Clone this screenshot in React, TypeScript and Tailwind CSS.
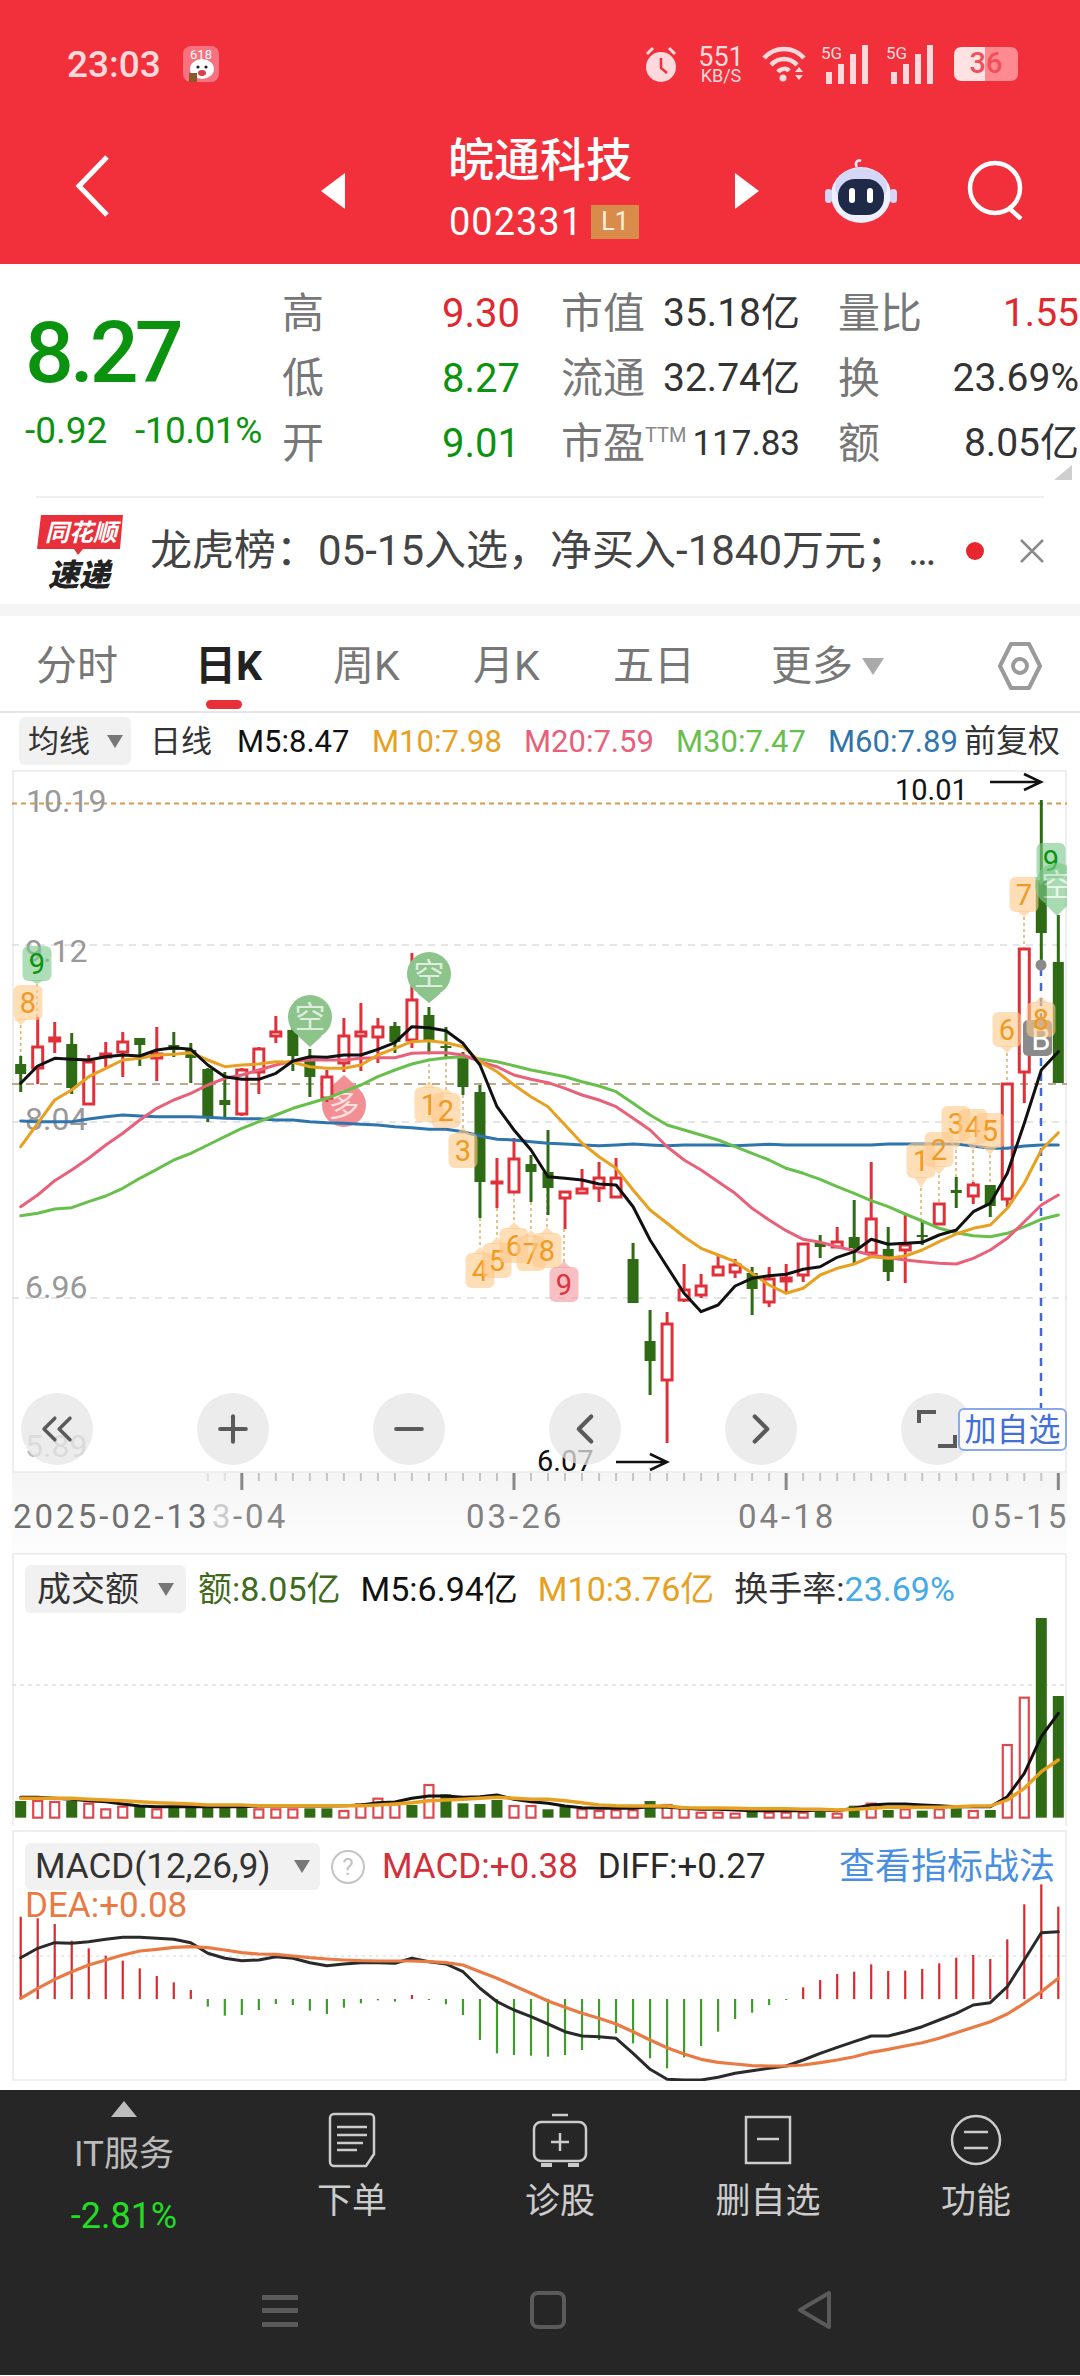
import { ChevronLeft, ChevronRight, ChevronsLeft, Minus, Plus } from "lucide-react";

type Candle = [number, number, number, number, "r" | "g"];

const RED = "#e0313a";
const GREEN = "#2f6a14";
const stepX = (i: number) => 20.7 + i * 17.01;

// hi, lo, body top, body bottom, colour
const CANDLES: Candle[] = [
  [1056, 1092, 1064, 1074, "g"], [1017, 1084, 1046, 1069, "r"], [1022, 1053, 1037, 1042, "r"], [1033, 1094, 1044, 1088, "g"],
  [1055, 1105, 1061, 1105, "r"], [1042, 1067, 1053, 1058, "r"], [1032, 1077, 1041, 1053, "r"], [1038, 1066, 1038, 1045, "g"],
  [1027, 1081, 1053, 1059, "r"], [1032, 1057, 1045, 1050, "g"], [1043, 1083, 1050, 1058, "g"], [1068, 1122, 1069, 1118, "g"],
  [1072, 1117, 1100, 1105, "g"], [1068, 1116, 1069, 1115, "r"], [1047, 1094, 1048, 1073, "r"], [1016, 1043, 1031, 1037, "r"],
  [1023, 1071, 1030, 1056, "g"], [1049, 1097, 1060, 1077, "g"], [1070, 1102, 1076, 1099, "r"], [1018, 1072, 1035, 1064, "r"],
  [1003, 1071, 1031, 1037, "r"], [1018, 1063, 1026, 1038, "r"], [1022, 1053, 1026, 1042, "g"], [953, 1048, 999, 1041, "r"],
  [1007, 1052, 1015, 1041, "g"], [1027, 1057, 1046, 1047, "g"], [1052, 1095, 1058, 1087, "g"], [1085, 1218, 1092, 1182, "g"],
  [1158, 1208, 1181, 1184, "r"], [1138, 1193, 1158, 1193, "r"], [1155, 1202, 1164, 1172, "g"], [1130, 1215, 1172, 1188, "g"],
  [1191, 1229, 1191, 1199, "r"], [1169, 1194, 1188, 1194, "r"], [1162, 1202, 1177, 1189, "r"], [1158, 1198, 1177, 1198, "r"],
  [1243, 1303, 1259, 1303, "g"], [1310, 1395, 1341, 1361, "g"], [1312, 1443, 1323, 1381, "r"], [1264, 1302, 1289, 1301, "r"],
  [1274, 1298, 1285, 1296, "r"], [1255, 1276, 1266, 1276, "r"], [1259, 1278, 1264, 1273, "r"], [1267, 1315, 1273, 1289, "g"],
  [1267, 1307, 1278, 1303, "r"], [1264, 1293, 1277, 1282, "r"], [1243, 1282, 1243, 1276, "r"], [1235, 1258, 1243, 1247, "g"],
  [1227, 1248, 1241, 1248, "r"], [1200, 1263, 1237, 1248, "g"], [1162, 1254, 1218, 1254, "r"], [1227, 1281, 1249, 1272, "g"],
  [1213, 1283, 1244, 1251, "r"], [1221, 1245, 1235, 1237, "g"], [1203, 1225, 1203, 1225, "r"], [1177, 1208, 1190, 1193, "g"],
  [1182, 1204, 1184, 1197, "r"], [1185, 1217, 1185, 1206, "g"], [1083, 1207, 1083, 1200, "r"], [948, 1103, 948, 1073, "r"],
  [800, 968, 880, 933, "g"], [915, 1083, 962, 1083, "g"],
];

const up = (z: number) => 760 + z / 3;
const dn = (z: number) => 1160 + z / 3;

const MA5 = [
  ...[970, 918, 895, 898, 900, 890, 885, 888, 870, 863, 868, 915, 950, 958, 958, 940, 903, 890, 892, 885, 885, 868, 848, 800, 803, 812, 850, 915, 1040, 1110, 1170].map(up),
  ...[50, 55, 60, 72, 75, 140, 240, 320, 400, 455, 435, 378, 355, 347, 343, 328, 320, 292, 275, 238, 253, 250, 247, 225, 210, 155, 130, 40].map(dn),
  ...[1090, 930, 875].map(up),
];
const MA10 = [
  ...[1160, 1090, 1020, 990, 950, 925, 900, 895, 885, 883, 878, 900, 920, 915, 912, 905, 907, 920, 925, 925, 915, 885, 865, 845, 842, 848, 860, 905, 935, 975, 1010, 1040, 1095, 1150].map(up),
  ...[-10, 25, 90, 150, 190, 230, 265, 285, 305, 340, 375, 400, 385, 345, 325, 312, 290, 295, 288, 270, 245, 222, 205, 195, 145, 70].map(dn),
  ...[1170, 1118].map(up),
];
const MA20 = [
  ...[140, 105, 62, 30].map(dn),
  ...[1195, 1155, 1120, 1080, 1045, 1020, 1000, 975, 955, 945, 930, 915, 903, 900, 900, 900, 895, 893, 893, 880, 878, 878, 885, 905, 920, 945, 958, 968, 985, 1005, 1020, 1040, 1075, 1110, 1160].map(up),
  ...[0, 30, 65, 100, 145, 180, 212, 238, 247, 260, 272, 285, 293, 300, 305, 310, 312, 295, 270, 235, 185, 135, 105].map(dn),
];
const MA30 = [
  ...[167, 160, 147, 143, 125, 108, 85, 55, 28].map(dn),
  ...[1200, 1180, 1155, 1130, 1105, 1085, 1065, 1045, 1030, 1015, 995, 975, 950, 930, 912, 900, 893, 890, 897, 905, 917, 930, 940, 950, 965, 978, 995, 1030, 1065, 1095, 1110, 1125, 1140, 1160, 1180].map(up),
  ...[0, 25, 40, 58, 80, 100, 122, 140, 162, 183, 205, 218, 227, 230, 220, 200, 178, 165].map(dn),
];
const MA60 = [
  1083, 1085, 1085, 1085, 1077, 1070, 1065, 1068, 1070, 1070, 1070, 1072, 1075, 1076, 1076, 1080, 1080, 1085, 1088, 1090, 1093, 1095, 1100, 1103, 1108, 1108, 1115, 1128, 1138, 1140, 1145,
  1150, 1152, 1155, 1157, 1155, 1152, 1155, 1157, 1155, 1155, 1155, 1157, 1155, 1153, 1155, 1155, 1155, 1155, 1155, 1155, 1152, 1152, 1152, 1152, 1152, 1158, 1165, 1165, 1158, 1155, 1155,
].map(up);

const VOL: [number, "r" | "g"][] = [
  [783, "g"], [780, "r"], [783, "r"], [783, "g"], [788, "r"], [805, "r"], [797, "r"], [800, "g"], [805, "r"], [800, "g"], [800, "g"], [800, "g"], [800, "g"], [800, "g"],
  [805, "r"], [805, "r"], [805, "r"], [805, "g"], [805, "g"], [810, "r"], [790, "r"], [773, "r"], [790, "r"], [795, "g"], [732, "r"], [763, "g"], [790, "g"], [792, "g"],
  [780, "g"], [795, "r"], [795, "r"], [808, "g"], [797, "g"], [805, "r"], [810, "r"], [808, "r"], [808, "r"], [783, "g"], [792, "r"], [800, "r"], [815, "r"], [815, "r"],
  [818, "r"], [812, "g"], [815, "r"], [815, "r"], [815, "r"], [815, "g"], [818, "r"], [797, "g"], [788, "r"], [810, "g"], [805, "r"], [812, "g"], [805, "r"], [805, "g"],
  [810, "r"], [810, "g"], [612, "r"], [470, "r"], [234, "g"], [468, "g"],
];
const VOL5 = [772, 772, 775, 778, 782, 785, 792, 798, 800, 800, 800, 800, 800, 800, 798, 798, 798, 798, 798, 797, 795, 788, 786, 775, 768, 768, 772, 770, 765, 778, 785, 790, 798, 803, 805, 805, 805, 800, 802, 805, 808, 808, 810, 812, 812, 812, 812, 810, 812, 805, 795, 792, 792, 795, 797, 800, 800, 800, 770, 700, 590, 520];
const VOL10 = [775, 775, 775, 775, 778, 780, 782, 785, 788, 790, 792, 795, 795, 795, 797, 797, 797, 797, 797, 797, 797, 795, 792, 788, 782, 780, 778, 775, 772, 775, 778, 778, 782, 788, 795, 797, 798, 798, 798, 803, 804, 804, 805, 806, 806, 806, 808, 808, 810, 808, 805, 802, 802, 802, 802, 800, 798, 798, 780, 745, 695, 660];

const HIST = [290, 295, 312, 362, 385, 407, 422, 445, 468, 487, 510, 560, 587, 585, 570, 552, 555, 572, 582, 563, 550, 541, 545, 525, 540, 553, 585, 660, 700, 705, 707, 710, 705, 690, 660, 640, 670, 715, 745, 712, 678, 635, 597, 578, 555, 540, 502, 480, 462, 455, 433, 453, 452, 447, 430, 413, 405, 417, 358, 253, 193, 260];
const DIFF = [413, 385, 368, 370, 365, 358, 352, 352, 355, 358, 368, 400, 415, 422, 420, 410, 415, 428, 437, 432, 428, 428, 430, 415, 425, 432, 455, 505, 545, 570, 590, 612, 635, 648, 650, 655, 700, 748, 778, 780, 780, 772, 760, 752, 745, 738, 720, 700, 682, 665, 648, 648, 635, 620, 600, 580, 555, 548, 500, 420, 338, 335];
const DEA = [535, 505, 478, 455, 435, 420, 405, 393, 388, 382, 380, 383, 390, 398, 402, 403, 408, 413, 417, 420, 422, 423, 423, 423, 425, 428, 435, 455, 475, 497, 520, 543, 562, 580, 595, 612, 635, 660, 683, 702, 718, 727, 732, 737, 738, 738, 735, 728, 720, 710, 697, 688, 678, 668, 655, 638, 622, 605, 582, 550, 515, 475];

const linePoints = (ys: number[]) => ys.map((y, i) => `${stepX(i).toFixed(1)},${y.toFixed(1)}`).join(" ");

function Curve({ ys, color, width = 3 }: { ys: number[]; color: string; width?: number }) {
  return <polyline points={linePoints(ys)} fill="none" stroke={color} strokeWidth={width} strokeLinejoin="round" strokeLinecap="round" />;
}

type TagProps = { x: number; y: number; tip: number; tipY: number; text: string; tone?: "orange" | "green" | "pink" };

// numbered flag sitting on a candle, the point aims at the candle
function Tag({ x, y, tip, tipY, text, tone = "orange" }: TagProps) {
  const fill = tone === "orange" ? "#fdc98a" : tone === "green" ? "#7cc98a" : "#f59aa0";
  const color = tone === "orange" ? "#f09a24" : tone === "green" ? "#0b930f" : "#e0313a";
  const w = 29;
  const h = 35;
  const base = tipY < y ? y + 1 : y + h - 1;
  return (
    <g>
      <polygon points={`${tip - 7},${base} ${tip + 7},${base} ${tip},${tipY}`} fill={fill} fillOpacity={0.62} />
      <rect x={x - w / 2} y={y} width={w} height={h} rx={6} fill={fill} fillOpacity={0.62} />
      <text x={x} y={y + 28} textAnchor="middle" fontSize={29} fill={color}>
        {text}
      </text>
    </g>
  );
}

function Drop({ x, y, tipY, text, fill }: { x: number; y: number; tipY: number; text: string; fill: string }) {
  const base = tipY > y ? y + 19 : y - 19;
  return (
    <g>
      <polygon points={`${x - 12},${base} ${x + 12},${base} ${x},${tipY}`} fill={fill} />
      <circle cx={x} cy={y} r={22} fill={fill} />
      <text x={x} y={y + 11} textAnchor="middle" fontSize={31} fill="#ffffff" fillOpacity={0.72}>
        {text}
      </text>
    </g>
  );
}

const LEADERS: [number, number, number][] = [
  [37, 984, 1017], [20.7, 1025, 1056], [429, 1052, 1085], [446, 1057, 1090], [463, 1095, 1128], [480, 1218, 1248], [497, 1208, 1238],
  [514, 1193, 1222], [531, 1202, 1230], [547, 1188, 1228], [564, 1229, 1262], [921, 1188, 1221], [939, 1175, 1203], [956, 1150, 1177],
  [973, 1150, 1182], [990, 1155, 1185], [1007, 1053, 1083], [1024, 917, 948],
];

function KChart() {
  return (
    <svg viewBox="12 770 1055 703" className="absolute inset-0 w-[1055px] h-[703px]">
      <line x1={12} x2={1067} y1={945} y2={945} stroke="#dddddd" strokeWidth={1.5} strokeDasharray="7 6" />
      <line x1={12} x2={1067} y1={1122} y2={1122} stroke="#dddddd" strokeWidth={1.5} strokeDasharray="7 6" />
      <line x1={12} x2={1067} y1={1298} y2={1298} stroke="#dddddd" strokeWidth={1.5} strokeDasharray="7 6" />
      <line x1={12} x2={1067} y1={803.5} y2={803.5} stroke="#d39a50" strokeWidth={2} strokeDasharray="5 4" />
      <line x1={12} x2={1067} y1={1084} y2={1084} stroke="#bda98c" strokeWidth={2} strokeDasharray="8 6" />

      <text x={26} y={812} fontSize={32} fill="#999999">10.19</text>
      <text x={25} y={962} fontSize={32} fill="#999999">9.12</text>
      <text x={25} y={1130} fontSize={32} fill="#999999">8.04</text>
      <text x={25} y={1298} fontSize={32} fill="#999999">6.96</text>
      <text x={25} y={1457} fontSize={32} fill="#bbbbbb">5.89</text>

      <Drop x={344} y={1105} tipY={1075} text="多" fill="#f28f94" />

      {LEADERS.map(([x, a, b]) => (
        <line key={`${x}-${a}`} x1={x} x2={x} y1={a} y2={b} stroke="#d9b26a" strokeWidth={1.5} strokeDasharray="3 3" />
      ))}

      <line x1={1041} x2={1041} y1={968} y2={1408} stroke="#4169d0" strokeWidth={2.5} strokeDasharray="8 7" />

      {CANDLES.map(([hi, lo, top, bot, c], i) => {
        const x = stepX(i);
        const color = c === "r" ? RED : GREEN;
        return (
          <g key={i}>
            <line x1={x} x2={x} y1={hi} y2={lo} stroke={color} strokeWidth={3} />
            {c === "r" ? (
              <rect x={x - 5} y={top + 1} width={10} height={Math.max(bot - top - 2, 1)} fill="#ffffff" stroke={color} strokeWidth={3} />
            ) : (
              <rect x={x - 5.5} y={top} width={11} height={Math.max(bot - top, 2)} fill={color} />
            )}
          </g>
        );
      })}

      <Curve ys={MA60} color="#2f75ad" />
      <Curve ys={MA30} color="#68bf4c" />
      <Curve ys={MA20} color="#e8607a" />
      <Curve ys={MA10} color="#e8a020" />
      <Curve ys={MA5} color="#111111" />

      <Drop x={310} y={1017} tipY={1047} text="空" fill="#8cc48c" />
      <Drop x={429} y={974} tipY={1003} text="空" fill="#8cc48c" />

      <Tag x={37} y={946} tip={37} tipY={984} text="9" tone="green" />
      <Tag x={28} y={985} tip={20.7} tipY={1025} text="8" />
      <Tag x={429} y={1087} tip={429} tipY={1082} text="1" />
      <Tag x={446} y={1093} tip={446} tipY={1088} text="2" />
      <Tag x={463} y={1133} tip={463} tipY={1127} text="3" />
      <Tag x={480} y={1253} tip={480} tipY={1247} text="4" />
      <Tag x={497} y={1243} tip={497} tipY={1237} text="5" />
      <Tag x={514} y={1228} tip={514} tipY={1222} text="6" />
      <Tag x={531} y={1236} tip={531} tipY={1230} text="7" />
      <Tag x={547} y={1233} tip={547} tipY={1227} text="8" />
      <Tag x={564} y={1267} tip={564} tipY={1261} text="9" tone="pink" />
      <Tag x={921} y={1143} tip={921} tipY={1188} text="1" />
      <Tag x={939} y={1132} tip={939} tipY={1175} text="2" />
      <Tag x={956} y={1106} tip={956} tipY={1150} text="3" />
      <Tag x={973} y={1109} tip={973} tipY={1150} text="4" />
      <Tag x={990} y={1113} tip={990} tipY={1155} text="5" />
      <Tag x={1007} y={1012} tip={1007} tipY={1053} text="6" />
      <Tag x={1024} y={877} tip={1024} tipY={917} text="7" />

      <rect x={1023} y={1020} width={29} height={36} rx={5} fill="#8a8a8a" />
      <text x={1041} y={1050} textAnchor="middle" fontSize={31} fill="#ffffff">B</text>
      <Tag x={1041} y={1002} tip={1041} tipY={996} text="8" />
      <circle cx={1041} cy={965} r={5.5} fill="#8a8a8a" />

      <Tag x={1051} y={843} tip={1041} tipY={885} text="9" tone="green" />
      <g opacity={0.65}>
        <Drop x={1057} y={885} tipY={916} text="空" fill="#7cc98a" />
      </g>

      <text x={895} y={800} fontSize={29} fill="#111111">10.01</text>
      <path d="M990 782h50M1024 774l17 8-17 8" fill="none" stroke="#111111" strokeWidth={2.5} />
      <text x={537} y={1471} fontSize={29} fill="#111111">6.07</text>
      <path d="M616 1462h50M650 1454l17 8-17 8" fill="none" stroke="#111111" strokeWidth={2.5} />
    </svg>
  );
}

function DateAxis() {
  return (
    <div className="relative h-[80px] w-[1055px] ml-[12px] bg-linear-to-b from-[#f5f5f5] to-[#fdfdfd]">
      <svg viewBox="12 1473 1055 80" className="absolute inset-0 w-[1055px] h-[80px]">
        {Array.from({ length: 51 }, (_, k) => {
          const i = k + 11;
          const major = (i - 13) % 16 === 0;
          return (
            <line
              key={i}
              x1={stepX(i)}
              x2={stepX(i)}
              y1={1473}
              y2={major ? 1490 : 1481}
              stroke={major ? "#888888" : "#c4c4c4"}
              strokeWidth={major ? 3 : 2}
              opacity={i < 13 ? 0.4 : 1}
            />
          );
        })}
        <text x={13} y={1528} fontSize={33} fill="#707070" className="tracking-[3px]">2025-02-13</text>
        <text x={212} y={1528} fontSize={33} fill="#cccccc" className="tracking-[3px]">3</text>
        <text x={233} y={1528} fontSize={33} fill="#888888" className="tracking-[3px]">-04</text>
        <text x={466} y={1528} fontSize={33} fill="#808080" className="tracking-[3px]">03-26</text>
        <text x={738} y={1528} fontSize={33} fill="#808080" className="tracking-[3px]">04-18</text>
        <text x={971} y={1528} fontSize={33} fill="#808080" className="tracking-[3px]">05-15</text>
      </svg>
    </div>
  );
}

function Caret() {
  return <span className="inline-block w-0 h-0 border-x-[8px] border-x-transparent border-t-[13px] border-t-[#777777]" />;
}

function VolumePanel() {
  const base = 1540 + 833 / 3;
  const vy = (z: number) => 1540 + z / 3;
  return (
    <div className="relative h-[277px] w-[1055px] ml-[12px] ring-2 ring-inset ring-[#eeeeee]">
      <svg viewBox="12 1553 1055 277" className="absolute inset-0 w-[1055px] h-[277px]">
        <rect x={0} y={1826} width={1080} height={5} fill="#ffffff" />
        <line x1={12} x2={1067} y1={1685} y2={1685} stroke="#dddddd" strokeWidth={1.5} strokeDasharray="4 4" />
        {VOL.map(([z, c], i) => {
          const x = stepX(i);
          const top = vy(z);
          return c === "g" ? (
            <rect key={i} x={x - 5.5} y={top} width={11} height={base - top} fill={GREEN} />
          ) : (
            <rect key={i} x={x - 4.5} y={top + 1} width={9} height={base - top - 1} fill="#ffffff" stroke="#dc4a50" strokeWidth={2.2} />
          );
        })}
        <Curve ys={VOL5.map(vy)} color="#111111" width={3} />
        <Curve ys={VOL10.map(vy)} color="#e8a020" width={3.4} />
      </svg>
      <div className="relative flex items-center h-[48px] pt-[12px] box-content text-[34px] leading-none">
        <div className="ml-[13px] flex items-center justify-between w-[161px] h-[48px] px-[12px] rounded-[6px] bg-[#f1f1f1] text-[#333333]">
          <span>成交额</span>
          <Caret />
        </div>
        <div className="ml-[12px] flex items-center gap-[20px]">
          <span className="text-[#3f6b1c]">额:8.05亿</span>
          <span className="text-[#111111]">M5:6.94亿</span>
          <span className="text-[#e8a020]">M10:3.76亿</span>
          <span className="text-[#333333]">
            换手率:<span className="text-[#45a9e8]">23.69%</span>
          </span>
        </div>
      </div>
    </div>
  );
}

function MacdPanel() {
  const my = (z: number) => 1820 + z / 3;
  const zero = my(537);
  return (
    <div className="relative h-[251px] w-[1055px] ml-[12px] ring-2 ring-inset ring-[#eeeeee]">
      <svg viewBox="12 1830 1055 251" className="absolute inset-0 w-[1055px] h-[251px]">
        <line x1={12} x2={1067} y1={1956} y2={1956} stroke="#e3e3e3" strokeWidth={1.5} strokeDasharray="3 4" />
        {HIST.map((z, i) => {
          const y = my(z);
          const isRed = z < 537;
          return (
            <line
              key={i}
              x1={stepX(i)}
              x2={stepX(i)}
              y1={Math.min(y, zero)}
              y2={Math.max(y, zero)}
              stroke={isRed ? "#d9292f" : "#3f9e2a"}
              strokeWidth={2.2}
            />
          );
        })}
        <Curve ys={DIFF.map(my)} color="#2a2a2a" width={3} />
        <Curve ys={DEA.map(my)} color="#ea7a44" width={3.2} />
      </svg>
      <div className="relative flex items-center h-[47px] pt-[13px] box-content text-[35px] leading-none">
        <div className="ml-[13px] flex items-center justify-between w-[295px] h-[47px] px-[10px] rounded-[6px] bg-[#f1f1f1] text-[#333333]">
          <span>MACD(12,26,9)</span>
          <Caret />
        </div>
        <span className="ml-[11px] flex items-center justify-center w-[34px] h-[34px] rounded-full border-2 border-[#c4c4c4] text-[24px] text-[#c4c4c4]">?</span>
        <span className="ml-[17px] text-[#d2303a]">MACD:+0.38</span>
        <span className="ml-[20px] text-[#2a2a2a]">DIFF:+0.27</span>
        <span className="ml-auto mr-[12px] text-[36px] text-[#4a8fdf]">查看指标战法</span>
      </div>
      <div className="relative ml-[13px] -mt-[2px] text-[35px] leading-[36px] text-[#ea7a44]">DEA:+0.08</div>
    </div>
  );
}

function RoundBtn({ children }: { children: React.ReactNode }) {
  return <div className="flex items-center justify-center w-[72px] h-[72px] rounded-full bg-[#e6e6e6]/75 text-[#5a5a5a]">{children}</div>;
}

function SignalBars({ className }: { className: string }) {
  return (
    <svg viewBox="0 0 52 40" className={`${className} w-[52px] h-[40px]`}>
      <text x={0} y={15} fontSize={17} fill="#ffd9db">5G</text>
      <rect x={5} y={28} width={6} height={12} fill="#ffd9db" />
      <rect x={17} y={20} width={6} height={20} fill="#ffd9db" />
      <rect x={29} y={10} width={6} height={30} fill="#ffd9db" />
      <rect x={41} y={1} width={6} height={39} fill="#ffd9db" />
    </svg>
  );
}

function StatusBar() {
  return (
    <div className="flex items-center h-[92px] pt-[36px] pl-[67px] pr-[62px] text-[#ffd9db]">
      <span className="text-[37px] font-medium leading-none">23:03</span>
      <svg viewBox="0 0 36 36" className="ml-[22px] w-[36px] h-[36px]">
        <rect width={36} height={36} rx={8} fill="#f7717e" />
        <text x={18} y={13} textAnchor="middle" fontSize={13} fill="#ffffff">618</text>
        <ellipse cx={19} cy={23} rx={12} ry={10} fill="#ffffff" />
        <circle cx={15} cy={21} r={1.6} fill="#222222" />
        <circle cx={23} cy={21} r={1.6} fill="#222222" />
        <ellipse cx={19} cy={27} rx={4} ry={3} fill="#d6404a" />
        <rect x={6} y={27} width={8} height={9} fill="#8a5a2a" />
      </svg>
      <div className="ml-auto flex items-center">
        <svg viewBox="0 0 36 38" className="w-[36px] h-[38px]">
          <circle cx={18} cy={22} r={15} fill="#ffd9db" />
          <path d="M18 13v10l6 5" fill="none" stroke="#f1303b" strokeWidth={2.5} />
          <path d="M4 9l6-6M32 9l-6-6" stroke="#ffd9db" strokeWidth={3} />
        </svg>
        <div className="ml-[20px] flex flex-col items-center w-[44px] leading-none">
          <span className="text-[27px] h-[23px] leading-[23px]">551</span>
          <span className="text-[18px] h-[14px] leading-[14px]">KB/S</span>
        </div>
        <svg viewBox="0 0 46 38" className="ml-[18px] w-[46px] h-[38px]">
          <g fill="none" stroke="#ffd9db" strokeWidth={4.5}>
            <path d="M3 13C14 1 32 1 43 13" />
            <path d="M10 20C17 12 29 12 36 20" />
            <path d="M17 27C20 23 26 23 28 26" />
          </g>
          <circle cx={22} cy={33} r={3.5} fill="#ffd9db" />
          <path d="M34 27l4-5 4 5zM34 30l4 5 4-5z" fill="#ffd9db" />
        </svg>
        <SignalBars className="ml-[14px]" />
        <SignalBars className="ml-[13px]" />
        <div className="relative ml-[16px] flex w-[64px] h-[34px] rounded-[7px] overflow-hidden">
          <div className="w-[31px] bg-[#ffe2e4]" />
          <div className="flex-1 bg-[#ff8a92]" />
          <span className="absolute inset-0 flex items-center justify-center text-[29px] font-medium text-[#f1505a]">36</span>
        </div>
      </div>
    </div>
  );
}

function Robot() {
  return (
    <svg viewBox="0 0 72 66" className="w-[72px] h-[66px]">
      <path d="M32 10c-3-4 1-8 4-6" fill="none" stroke="#e9e6ff" strokeWidth={2.5} />
      <ellipse cx={36} cy={38} rx={30} ry={28} fill="#eef0ff" />
      <ellipse cx={36} cy={30} rx={26} ry={19} fill="#d6d6f6" />
      <rect x={13} y={22} width={46} height={36} rx={17} fill="#1f2a48" />
      <rect x={24} y={31} width={6} height={15} rx={3} fill="#ffffff" />
      <rect x={42} y={31} width={6} height={15} rx={3} fill="#ffffff" />
      <rect x={0} y={32} width={7} height={14} rx={3.5} fill="#d6d6f6" />
      <rect x={65} y={32} width={7} height={14} rx={3.5} fill="#d6d6f6" />
    </svg>
  );
}

function NavRow() {
  return (
    <div className="flex items-center h-[172px] pl-[72px] text-white">
      <svg viewBox="0 0 40 62" className="w-[40px] h-[62px] mt-[16px]">
        <path d="M35 2L7 31l28 29" fill="none" stroke="#ffffff" strokeWidth={5} />
      </svg>
      <svg viewBox="0 0 24 36" className="ml-[209px] w-[24px] h-[36px] mt-[26px]">
        <path d="M24 0v36L0 18z" fill="#ffffff" />
      </svg>
      <div className="flex flex-col items-center w-[390px] mt-[13px]">
        <span className="text-[46px] leading-[60px] font-medium">皖通科技</span>
        <div className="flex items-center mt-[14px] ml-[8px]">
          <span className="text-[38px] leading-[36px] tracking-[1px]">002331</span>
          <span className="ml-[8px] flex items-center justify-center w-[48px] h-[34px] bg-[#d98c4a] text-[25px] text-[#fff2e0]">L1</span>
        </div>
      </div>
      <svg viewBox="0 0 24 36" className="w-[24px] h-[36px] mt-[26px]">
        <path d="M0 0v36l24-18z" fill="#ffffff" />
      </svg>
      <div className="ml-[66px] w-[72px] mt-[24px]">
        <Robot />
      </div>
      <svg viewBox="0 0 60 60" className="ml-[69px] w-[60px] h-[60px] mt-[24px]">
        <circle cx={29} cy={28} r={25} fill="none" stroke="#ffffff" strokeWidth={4.5} />
        <path d="M42 47l13 12" stroke="#ffffff" strokeWidth={4.5} />
      </svg>
    </div>
  );
}

function StatRow({ label, val, tone, b, c }: { label: string; val: string; tone: string; b: React.ReactNode; c: React.ReactNode }) {
  return (
    <div className="flex items-center h-[65px]">
      <span className="w-[160px] text-[42px] leading-none text-[#777777]">{label}</span>
      <span className={`w-[78px] text-right text-[40px] leading-none ${tone}`}>{val}</span>
      <div className="ml-[41px] w-[239px] flex items-center justify-between whitespace-nowrap">{b}</div>
      <div className="ml-[38px] w-[241px] flex items-center justify-between whitespace-nowrap">{c}</div>
    </div>
  );
}

function Label({ children }: { children: React.ReactNode }) {
  return <span className="text-[42px] leading-none text-[#777777]">{children}</span>;
}

function Num({ children, tone = "text-[#333333]" }: { children: React.ReactNode; tone?: string }) {
  return <span className={`text-[39px] leading-none ${tone}`}>{children}</span>;
}

function Quote() {
  return (
    <div className="relative flex h-[232px] pt-[17px]">
      <div className="w-[282px] pl-[25px] text-[#0b930f]">
        <div className="mt-[29px] text-[86px] leading-[86px] font-medium tracking-[-4px]">8.27</div>
        <div className="mt-[16px] flex text-[37px] leading-none whitespace-nowrap">
          <span className="w-[110px]">-0.92</span>
          <span className="tracking-[-0.5px]">-10.01%</span>
        </div>
      </div>
      <div className="flex flex-col">
        <StatRow label="高" val="9.30" tone="text-[#e0282e]" b={<><Label>市值</Label><Num>35.18亿</Num></>} c={<><Label>量比</Label><Num tone="text-[#e0282e]">1.55</Num></>} />
        <StatRow label="低" val="8.27" tone="text-[#0b930f]" b={<><Label>流通</Label><Num>32.74亿</Num></>} c={<><Label>换</Label><Num>23.69%</Num></>} />
        <StatRow
          label="开"
          val="9.01"
          tone="text-[#0b930f]"
          b={
            <>
              <span className="flex items-start">
                <Label>市盈</Label>
                <span className="text-[20px] leading-none text-[#888888] mt-[2px]">TTM</span>
              </span>
              <span className="text-[35px] leading-none text-[#333333]">117.83</span>
            </>
          }
          c={<><Label>额</Label><Num>8.05亿</Num></>}
        />
      </div>
      <span className="absolute left-[1054px] top-[201px] w-0 h-0 border-l-[18px] border-l-transparent border-b-[15px] border-b-[#cfcfcf]" />
    </div>
  );
}

function NewsRow() {
  return (
    <div className="flex items-center h-[108px] border-t-2 border-[#eeeeee] mx-[36px] text-[#444444]">
      <svg viewBox="0 0 90 76" className="-ml-[1px] w-[90px] h-[76px] shrink-0">
        <path d="M6 2h82l-3 34H48l-5 6-4-6H2z" fill="#e8303a" />
        <text x={46} y={28} textAnchor="middle" fontSize={24} fontWeight={700} fontStyle="italic" fill="#ffffff">同花顺</text>
        <text x={44} y={73} textAnchor="middle" fontSize={31} fontWeight={900} fontStyle="italic" fill="#222222">速递</text>
      </svg>
      <span className="ml-[25px] w-[816px] shrink-0 text-[42px] leading-none whitespace-nowrap">龙虎榜：05-15入选，净买入-1840万元；…</span>
      <span className="w-[18px] h-[18px] shrink-0 rounded-full bg-[#e8262e]" />
      <svg viewBox="0 0 24 24" className="ml-[36px] w-[24px] h-[24px] shrink-0">
        <path d="M1 1l22 22M23 1L1 23" stroke="#8a8a8a" strokeWidth={2.5} />
      </svg>
    </div>
  );
}

function Tabs() {
  return (
    <div className="grid grid-cols-[159px_138px_140px_140px_158px_120px_1fr] items-center h-[97px] pl-[36px] pt-[5px] border-b-2 border-[#e6e6e6] text-[41px] leading-none text-[#777777] whitespace-nowrap">
      <span>分时</span>
      <span className="relative font-bold text-[#222222]">
        日K
        <span className="absolute left-[11px] top-[54px] w-[36px] h-[9px] rounded-full bg-[#e8303a]" />
      </span>
      <span>周K</span>
      <span>月K</span>
      <span>五日</span>
      <span className="flex items-center">
        更多
        <span className="ml-[9px] w-0 h-0 border-x-[11px] border-x-transparent border-t-[17px] border-t-[#aaaaaa]" />
      </span>
      <svg viewBox="0 0 46 50" className="justify-self-end mr-[37px] w-[46px] h-[50px]">
        <path d="M14 3h18l11 22-11 22H14L3 25z" fill="none" stroke="#9a9a9a" strokeWidth={4} strokeLinejoin="round" />
        <circle cx={23} cy={25} r={7} fill="none" stroke="#9a9a9a" strokeWidth={4} />
      </svg>
    </div>
  );
}

function MaLegend() {
  return (
    <div className="flex items-center h-[53px] pl-[19px] pt-[3px] text-[31px] leading-none whitespace-nowrap">
      <div className="flex items-center justify-between w-[112px] h-[48px] pl-[9px] pr-[8px] rounded-[6px] bg-[#f1f1f1] text-[#333333]">
        均线
        <Caret />
      </div>
      <span className="ml-[19px] w-[87px] text-[#333333]">日线</span>
      <span className="w-[135px] text-[#111111]">M5:8.47</span>
      <span className="w-[152px] text-[#e8a020]">M10:7.98</span>
      <span className="w-[152px] text-[#e8607a]">M20:7.59</span>
      <span className="w-[152px] text-[#68bf4c]">M30:7.47</span>
      <span className="w-[136px] text-[#2f75ad]">M60:7.89</span>
      <span className="text-[32px] text-[#333333]">前复权</span>
    </div>
  );
}

function ToolItem({ label, children }: { label: string; children: React.ReactNode }) {
  return (
    <div className="flex flex-col items-center pt-[22px] text-[#cccccc]">
      <div className="flex items-center justify-center h-[56px]">{children}</div>
      <span className="mt-[14px] text-[35px] leading-[40px]">{label}</span>
    </div>
  );
}

function Toolbar() {
  return (
    <div className="bg-[#262626] h-[285px]">
      <div className="grid grid-cols-[248px_repeat(4,1fr)] h-[190px]">
        <div className="flex flex-col items-center pt-[11px]">
          <span className="w-0 h-0 border-x-[13px] border-x-transparent border-b-[16px] border-b-[#bdbdbd]" />
          <span className="mt-[18px] text-[35px] leading-[40px] text-[#bbbbbb]">IT服务</span>
          <span className="mt-[21px] text-[36px] leading-[40px] text-[#22dd22]">-2.81%</span>
        </div>
        <ToolItem label="下单">
          <svg viewBox="0 0 48 56" className="w-[48px] h-[56px]" fill="none" stroke="#cccccc" strokeWidth={2.5}>
            <path d="M6 2h36a4 4 0 0 1 4 4v36l-8 12H6a4 4 0 0 1-4-4V6a4 4 0 0 1 4-4z" />
            <path d="M9 15h30M9 23h30M9 31h26M9 38h20" />
          </svg>
        </ToolItem>
        <ToolItem label="诊股">
          <svg viewBox="0 0 56 54" className="w-[56px] h-[54px]" fill="none" stroke="#cccccc" strokeWidth={2.5}>
            <path d="M20 2h16" />
            <rect x={2} y={9} width={52} height={39} rx={7} />
            <path d="M28 20v18M19 29h18" />
            <path d="M9 52h11M36 52h11" strokeWidth={4} />
          </svg>
        </ToolItem>
        <ToolItem label="删自选">
          <svg viewBox="0 0 48 50" className="w-[48px] h-[50px]" fill="none" stroke="#cccccc" strokeWidth={2.5}>
            <rect x={2} y={2} width={44} height={46} />
            <path d="M13 24h22" />
          </svg>
        </ToolItem>
        <ToolItem label="功能">
          <svg viewBox="0 0 52 52" className="w-[52px] h-[52px]" fill="none" stroke="#cccccc" strokeWidth={2.5}>
            <circle cx={26} cy={26} r={24} />
            <path d="M14 18h24M14 34h24" />
          </svg>
        </ToolItem>
      </div>
      <div className="flex items-center gap-[232px] h-[40px] mt-[10px] pl-[262px]">
        <svg viewBox="0 0 36 36" className="w-[36px] h-[36px]">
          <path d="M0 3h36v5H0zM0 16h36v5H0zM0 30h36v5H0z" fill="#5a5a5a" />
        </svg>
        <svg viewBox="0 0 36 38" className="w-[36px] h-[38px]">
          <rect x={2} y={2} width={32} height={34} rx={6} fill="none" stroke="#5a5a5a" strokeWidth={4} />
        </svg>
        <svg viewBox="0 0 36 40" className="-ml-[2px] w-[36px] h-[40px]">
          <path d="M33 3v34L4 20z" fill="none" stroke="#5a5a5a" strokeWidth={4} strokeLinejoin="round" />
        </svg>
      </div>
    </div>
  );
}

export default function App() {
  return (
    <div className="flex flex-col w-[1080px] h-[2376px] overflow-hidden bg-white [font-family:Roboto,'Noto_Sans_CJK_SC',sans-serif]">
      <header className="h-[264px] bg-[#f1303b] shrink-0">
        <StatusBar />
        <NavRow />
      </header>
      <Quote />
      <NewsRow />
      <div className="h-[12px] bg-[#f5f5f5]" />
      <Tabs />
      <MaLegend />
      <div className="relative mt-[4px] ml-[12px] w-[1055px] h-[703px] ring-2 ring-inset ring-[#eeeeee]">
        <KChart />
        <div className="absolute left-[9px] top-[623px] flex gap-[104px]">
          <RoundBtn><ChevronsLeft size={52} strokeWidth={1.6} /></RoundBtn>
          <RoundBtn><Plus size={44} strokeWidth={2.2} /></RoundBtn>
          <RoundBtn><Minus size={44} strokeWidth={2.2} /></RoundBtn>
          <RoundBtn><ChevronLeft size={50} strokeWidth={2} /></RoundBtn>
          <RoundBtn><ChevronRight size={50} strokeWidth={2} /></RoundBtn>
          <RoundBtn>
            <svg viewBox="0 0 40 40" className="w-[40px] h-[40px]" fill="none" stroke="#5a5a5a" strokeWidth={4}>
              <path d="M2 14V3h17M38 26v11H21" />
            </svg>
          </RoundBtn>
        </div>
        <div className="absolute left-[946px] top-[638px] flex items-center justify-center w-[109px] h-[43px] rounded-[6px] border-2 border-[#8aa9ea] bg-white/70 text-[32px] leading-none text-[#4270d8]">
          加自选
        </div>
      </div>
      <DateAxis />
      <VolumePanel />
      <MacdPanel />
      <div className="h-[9px]" />
      <Toolbar />
    </div>
  );
}
